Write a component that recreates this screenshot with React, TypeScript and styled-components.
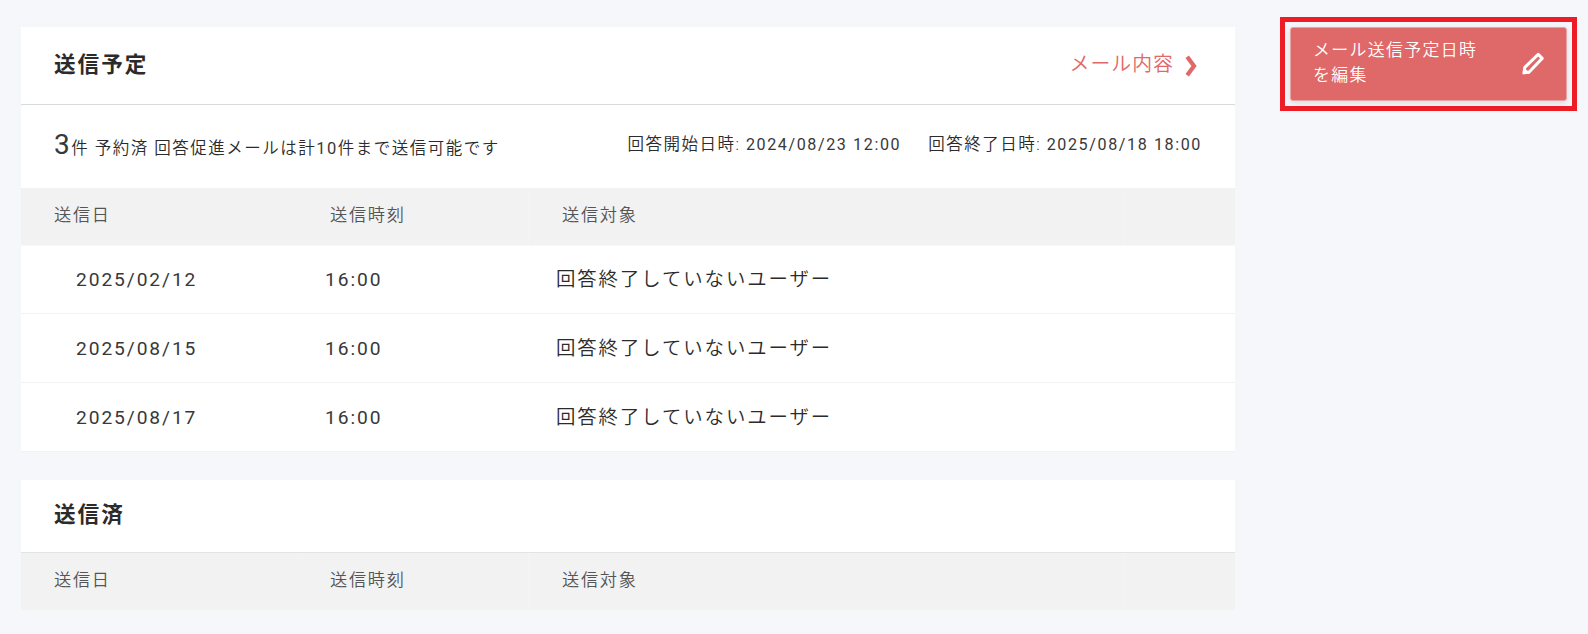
import React from "react";
import styled, { createGlobalStyle } from "styled-components";

const GlobalStyle = createGlobalStyle`
  * { box-sizing: border-box; }
  body {
    margin: 0;
    background: #f5f7fb;
    color: #2b2b2b;
    font-family: Roboto, "Noto Sans CJK JP", sans-serif;
    font-weight: 350;
  }
`;

const Page = styled.div`
  display: flex;
  align-items: flex-start;
  height: 634px;
  padding-left: 21px;
`;

const Main = styled.main`
  display: flex;
  flex-direction: column;
  gap: 28px;
  width: 1214px;
  padding-top: 27px;
`;

const Card = styled.section`
  background: #fff;
`;

const CardHeader = styled.header<{ $height: number; $lift: number; $line: string }>`
  display: flex;
  align-items: center;
  justify-content: space-between;
  height: ${(p) => p.$height}px;
  padding: 0 37px ${(p) => p.$lift}px 33px;
  border-bottom: 1px solid ${(p) => p.$line};
`;

const Title = styled.h2`
  margin: 0;
  font-size: 21.6px;
  line-height: 30px;
  font-weight: 700;
  letter-spacing: 2px;
`;

const MailLink = styled.a`
  display: flex;
  align-items: center;
  gap: 11px;
  color: #df6868;
  font-size: 19.9px;
  line-height: 30px;
  letter-spacing: 1px;

  svg { margin-top: 2px; }
`;

const Summary = styled.div`
  display: flex;
  justify-content: space-between;
  height: 83px;
  padding: 0 33px 0 33px;
  font-size: 16.5px;
  letter-spacing: 1.5px;
  white-space: nowrap;
`;

const Quota = styled.p`
  margin: 0;
  padding-top: 20px;
  line-height: 40px;
`;

const Figure = styled.span`
  font-weight: 400;
  color: #383838;
`;

const Count = styled(Figure)`
  font-size: 28px;
  letter-spacing: 1.4px;
`;

const Period = styled.div`
  display: flex;
  gap: 27px;
  padding-top: 27px;
  line-height: 26px;
`;

const DateText = styled(Figure)`
  font-size: 16.1px;
  letter-spacing: 1.6px;
`;

const columns = "276px 232px 595px 111px";

const HeadRow = styled.div`
  display: grid;
  grid-template-columns: ${columns};
  align-items: stretch;
  height: 58px;
  background: #f2f2f2;
  border-bottom: 1px solid #f7f7f7;
`;

const HeadCell = styled.div`
  display: flex;
  align-items: center;
  padding: 0 0 4px 33px;
  border-right: 1px solid #f4f4f4;
  color: #555;
  font-size: 17.2px;
  line-height: 26px;
  letter-spacing: 1.7px;

  &:first-child { border-right-color: #f3f3f3; }
  &:last-child { border-right: 0; }
`;

const Row = styled.div<{ $first: boolean }>`
  display: grid;
  grid-template-columns: ${columns};
  align-items: center;
  height: ${(p) => (p.$first ? 68 : 69)}px;
  padding-top: 1px;
  border-bottom: 1px solid #f2f2f2;
  font-size: 19.4px;
  line-height: 30px;
  letter-spacing: 1.92px;
`;

const Cell = styled.div<{ $indent: number }>`
  padding-left: ${(p) => p.$indent}px;
`;

const TimeCell = styled(Cell)`
  color: #383838;
  font-size: 19.2px;
  font-weight: 400;
`;

const Highlight = styled.div`
  width: 297px;
  height: 94px;
  margin: 17px 0 0 45px;
  padding: 5px;
  border: 5px solid #ee1c25;
`;

const EditButton = styled.button`
  display: flex;
  align-items: center;
  justify-content: space-between;
  width: 277px;
  height: 74px;
  padding: 0 22px 2px;
  border: 1px solid #e8a3a6;
  border-radius: 3px;
  background: #df6868;
  box-shadow: 0 2px 6px rgba(0, 0, 0, 0.12);
  color: #fff;
  font-family: inherit;
  font-size: 16.9px;
  font-weight: 350;
  line-height: 25px;
  letter-spacing: 1.35px;
  text-align: left;

  svg { margin-top: 1px; }
`;

const HeaderCells = () => (
  <HeadRow>
    <HeadCell>送信日</HeadCell>
    <HeadCell>送信時刻</HeadCell>
    <HeadCell>送信対象</HeadCell>
    <HeadCell />
  </HeadRow>
);

const schedule = ["2025/02/12", "2025/08/15", "2025/08/17"];

export default function App() {
  return (
    <>
      <GlobalStyle />
      <Page>
        <Main>
          <Card>
            <CardHeader $height={78} $lift={2} $line="#d9dbdb">
              <Title>送信予定</Title>
              <MailLink>
                メール内容
                <svg width="13" height="22" viewBox="0 0 13 22" fill="none">
                  <path d="M2.2 1.8 9 11 2.2 20.2" stroke="#df6868" strokeWidth="4.2" />
                </svg>
              </MailLink>
            </CardHeader>
            <Summary>
              <Quota>
                <Count>3</Count>件 予約済 回答促進メールは計<Figure>10</Figure>件まで送信可能です
              </Quota>
              <Period>
                <span>回答開始日時: <DateText>2024/08/23 12:00</DateText></span>
                <span>回答終了日時: <DateText>2025/08/18 18:00</DateText></span>
              </Period>
            </Summary>
            <HeaderCells />
            {schedule.map((date, index) => (
              <Row key={date} $first={index === 0}>
                <TimeCell $indent={55}>{date}</TimeCell>
                <TimeCell $indent={28}>16:00</TimeCell>
                <Cell $indent={27}>回答終了していないユーザー</Cell>
              </Row>
            ))}
          </Card>
          <Card>
            <CardHeader $height={73} $lift={3} $line="#e2e3e3">
              <Title>送信済</Title>
            </CardHeader>
            <HeaderCells />
          </Card>
        </Main>
        <Highlight>
          <EditButton>
            <span>メール送信予定日時<br />を編集</span>
            <svg width="22" height="23" viewBox="0 0 22 23" fill="none">
              <path
                d="M2 20.8 2.8 15.3 16.2 2.4 20.2 6.4 7.2 20Z"
                stroke="#fff" strokeWidth="3" strokeLinejoin="round"
              />
              <path d="M.6 22.3 1.5 15 8.1 21.4Z" fill="#fff" />
            </svg>
          </EditButton>
        </Highlight>
      </Page>
    </>
  );
}
